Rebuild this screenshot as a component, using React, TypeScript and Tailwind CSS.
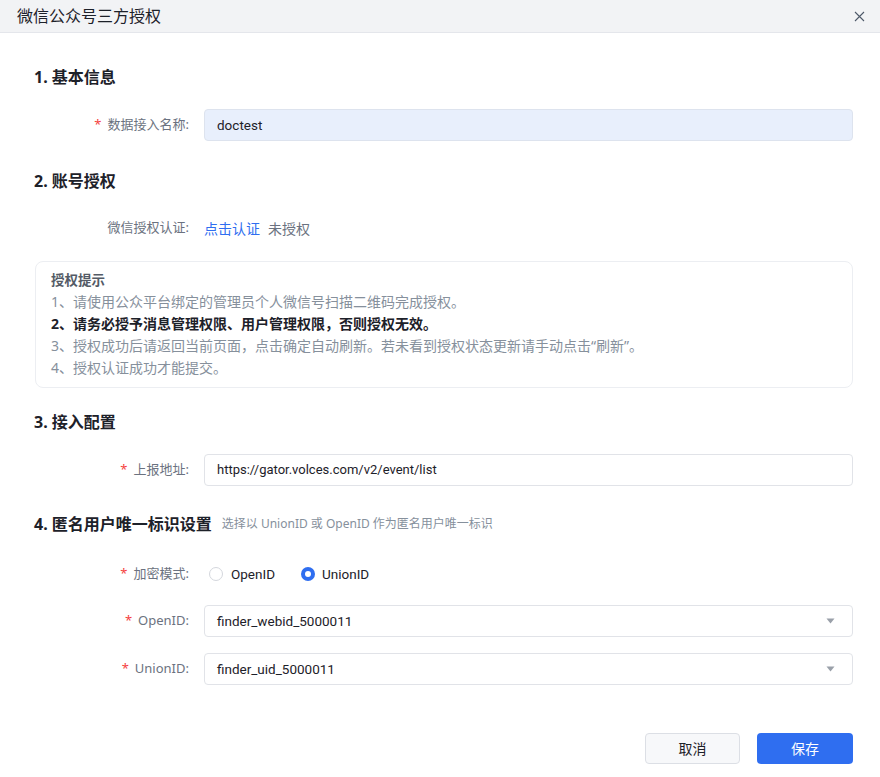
import React from "react";

const font = { fontFamily: '"Noto Sans", "Noto Sans CJK SC", sans-serif' };
const valueFont = { fontFamily: 'Roboto, "Noto Sans CJK SC", sans-serif' };

function Label({ text, required = true }: { text: string; required?: boolean }) {
  return (
    <div className="w-[155px] shrink-0 flex items-center justify-end text-[13px] text-[#6b7280] pr-0">
      {required && <span className="text-[#f53f3f] mr-[6px] text-[13px]">*</span>}
      <span>{text}</span>
    </div>
  );
}

function Arrow() {
  return (
    <svg width="9" height="6" viewBox="0 0 9 6" className="shrink-0">
      <path d="M0.5 0.5 L8.5 0.5 L4.5 5.5 Z" fill="#9aa0a9" />
    </svg>
  );
}

export default function App() {
  return (
    <div className="w-[880px] h-[777px] bg-white overflow-hidden" style={font}>
      {/* Header */}
      <div className="h-[33px] bg-[#f2f3f5] border-b border-[#e4e6eb] flex items-center justify-between pl-[17px] pr-[15px]">
        <span className="text-[16px] text-[#1d2129] leading-none">微信公众号三方授权</span>
        <svg width="11" height="11" viewBox="0 0 11 11">
          <path d="M1 1 L10 10 M10 1 L1 10" stroke="#4e5969" strokeWidth="1.1" />
        </svg>
      </div>

      <div className="pl-[34px] pr-[27px]">
        {/* Section 1 */}
        <div className="mt-[32px] h-[24px] flex items-center text-[16px] font-bold text-[#1d2129]">1. 基本信息</div>
        <div className="mt-[20px] flex items-center gap-[15px]">
          <Label text="数据接入名称:" />
          <div className="flex-1 h-[32px] rounded-[4px] border border-[#dde3ee] bg-[#e8effc] flex items-center px-[12px] text-[13.5px] text-[#1d2129]" style={valueFont}>
            doctest
          </div>
        </div>

        {/* Section 2 */}
        <div className="mt-[28px] h-[24px] flex items-center text-[16px] font-bold text-[#1d2129]">2. 账号授权</div>
        <div className="mt-[19px] h-[32px] flex items-center gap-[15px]">
          <Label text="微信授权认证:" required={false} />
          <div className="flex items-center text-[14px]">
            <span className="text-[#2f6ef0]">点击认证</span>
            <span className="ml-[8px] text-[#6b7280]">未授权</span>
          </div>
        </div>

        <div className="mt-[17px] ml-[1px] border border-[#eceef2] rounded-[8px] pl-[15px] pr-[14px] pt-[7px] pb-[8px] text-[14px] leading-[22px] text-[#86909c]">
          <div className="font-semibold text-[#545b66] text-[13.5px]">授权提示</div>
          <div>1、请使用公众平台绑定的管理员个人微信号扫描二维码完成授权。</div>
          <div className="font-bold text-[#1d2129]">2、请务必授予消息管理权限、用户管理权限，否则授权无效。</div>
          <div>3、授权成功后请返回当前页面，点击确定自动刷新。若未看到授权状态更新请手动点击“刷新”。</div>
          <div>4、授权认证成功才能提交。</div>
        </div>

        {/* Section 3 */}
        <div className="mt-[22px] h-[24px] flex items-center text-[16px] font-bold text-[#1d2129]">3. 接入配置</div>
        <div className="mt-[20px] flex items-center gap-[15px]">
          <Label text="上报地址:" />
          <div className="flex-1 h-[32px] rounded-[4px] border border-[#e1e3e8] bg-white flex items-center px-[12px] text-[13px] text-[#1d2129]" style={valueFont}>
            https://gator.volces.com/v2/event/list
          </div>
        </div>

        {/* Section 4 */}
        <div className="mt-[26px] h-[24px] flex items-center">
          <span className="text-[16px] font-bold text-[#1d2129]">4. 匿名用户唯一标识设置</span>
          <span className="ml-[10px] text-[12px] text-[#86909c]">选择以 UnionID 或 OpenID 作为匿名用户唯一标识</span>
        </div>
        <div className="mt-[22px] h-[32px] flex items-center gap-[15px]">
          <Label text="加密模式:" />
          <div className="flex items-center text-[13.5px] text-[#1d2129]" style={valueFont}>
            <span className="ml-[5px] w-[14px] h-[14px] rounded-full border border-[#d4d7dd] bg-white" />
            <span className="ml-[8px]">OpenID</span>
            <span className="ml-[26px] w-[14px] h-[14px] rounded-full bg-[#2f6ef0] flex items-center justify-center">
              <span className="w-[6px] h-[6px] rounded-full bg-white" />
            </span>
            <span className="ml-[7px]">UnionID</span>
          </div>
        </div>
        <div className="mt-[15px] flex items-center gap-[15px]">
          <Label text="OpenID:" />
          <div className="flex-1 h-[32px] rounded-[4px] border border-[#e1e3e8] bg-white flex items-center justify-between pl-[12px] pr-[17px] text-[13.5px] text-[#1d2129]" style={valueFont}>
            <span>finder_webid_5000011</span>
            <Arrow />
          </div>
        </div>
        <div className="mt-[16px] flex items-center gap-[15px]">
          <Label text="UnionID:" />
          <div className="flex-1 h-[32px] rounded-[4px] border border-[#e1e3e8] bg-white flex items-center justify-between pl-[12px] pr-[17px] text-[13.5px] text-[#1d2129]" style={valueFont}>
            <span>finder_uid_5000011</span>
            <Arrow />
          </div>
        </div>

        {/* Footer */}
        <div className="mt-[48px] flex justify-end gap-[17px]">
          <button className="w-[95px] h-[31px] rounded-[4px] border border-[#dcdfe5] bg-[#f7f8fa] text-[14px] text-[#1d2129]">取消</button>
          <button className="w-[96px] h-[31px] rounded-[4px] bg-[#2f6ef0] text-[14px] text-white">保存</button>
        </div>
      </div>
    </div>
  );
}
